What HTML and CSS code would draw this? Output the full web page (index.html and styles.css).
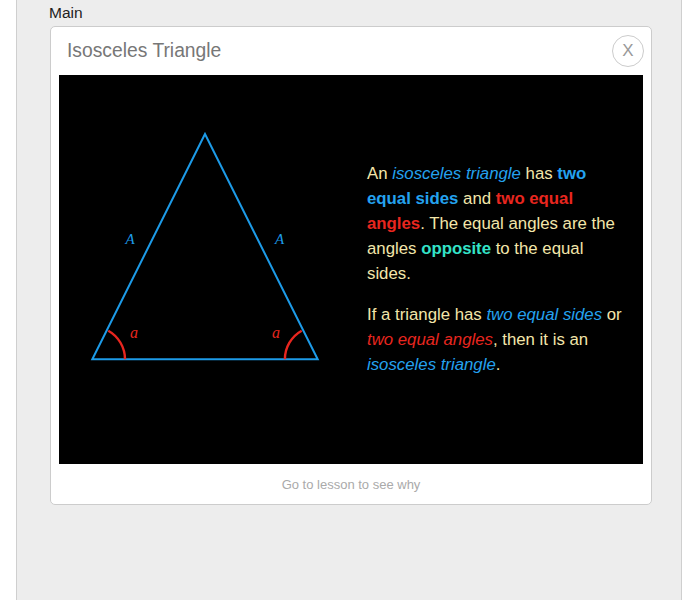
FILE: index.html
```html
<!DOCTYPE html>
<html>
<head>
<meta charset="utf-8">
<link rel="stylesheet" href="styles.css">
</head>
<body>
<div class="panel">
  <div class="label">Main</div>
  <div class="card">
    <div class="card-header">
      <div class="title">Isosceles Triangle</div>
      <div class="close">X</div>
    </div>
    <div class="figure">
      <svg class="diagram" width="290" height="389" viewBox="0 0 290 389">
        <polygon points="146,59 33.3,284.3 258.7,284.3" fill="none" stroke="#1d9be8" stroke-width="2" stroke-linejoin="miter"/>
        <path d="M49.3,255.7 A32.8,32.8 0 0 1 66,284.3" fill="none" stroke="#e8261f" stroke-width="2.4"/>
        <path d="M242.7,255.7 A32.8,32.8 0 0 0 225.9,284.3" fill="none" stroke="#e8261f" stroke-width="2.4"/>
        <text class="lbl-side" x="71" y="168.5" text-anchor="middle">A</text>
        <text class="lbl-side" x="220.5" y="168.5" text-anchor="middle">A</text>
        <text class="lbl-angle" x="75" y="262.5" text-anchor="middle">a</text>
        <text class="lbl-angle" x="217" y="262.5" text-anchor="middle">a</text>
      </svg>
      <div class="explain">
        <p>An <em class="blue">isosceles triangle</em> has <b class="blue">two equal sides</b> and <b class="red">two equal angles</b>. The equal angles are the angles <b class="teal">opposite</b> to the equal sides.</p>
        <p>If a triangle has <em class="blue">two equal sides</em> or <em class="red">two equal angles</em>, then it is an <em class="blue">isosceles triangle</em>.</p>
      </div>
    </div>
    <div class="card-footer">Go to lesson to see why</div>
  </div>
</div>
</body>
</html>
```
FILE: styles.css
```css
html, body {
  margin: 0;
  padding: 0;
  background: #ffffff;
}

body {
  font-family: "Liberation Sans", Arial, sans-serif;
}

.panel {
  margin-left: 16px;
  width: 666px;
  min-height: 600px;
  box-sizing: border-box;
  border-left: 1px solid #cfcfcf;
  border-right: 1px solid #cfcfcf;
  background: #ededed;
  padding-top: 3px;
}

.label {
  margin-left: 32px;
  font-size: 15.5px;
  line-height: 20px;
  color: #222;
}

.card {
  margin: 3px 0 0 33px;
  width: 602px;
  box-sizing: border-box;
  background: #fff;
  border: 1px solid #cccccc;
  border-radius: 5px;
}

.card-header {
  height: 48px;
  display: flex;
  align-items: center;
  justify-content: space-between;
  padding: 0 7px 0 16px;
}

.title {
  font-size: 19.3px;
  color: #777;
}

.close {
  width: 30px;
  height: 30px;
  border: 1px solid #cccccc;
  border-radius: 50%;
  display: flex;
  align-items: center;
  justify-content: center;
  font-size: 17px;
  color: #999;
}

.figure {
  margin: 0 8px;
  height: 389px;
  background: #000;
  display: flex;
  align-items: center;
}

.diagram {
  flex: none;
  align-self: stretch;
}

.lbl-side {
  font-family: "Liberation Serif", serif;
  font-style: italic;
  font-size: 15px;
  fill: #1d9be8;
}

.lbl-angle {
  font-family: "Liberation Serif", serif;
  font-style: italic;
  font-size: 16px;
  fill: #e8261f;
}

.explain {
  margin-left: 18px;
  margin-top: -2px;
  width: 260px;
  font-size: 16.8px;
  line-height: 25px;
  color: #f3e6aa;
}

.explain p {
  margin: 0 0 16px;
}

.explain p:last-child {
  margin-bottom: 0;
}

.explain em {
  font-style: italic;
}

.explain b {
  font-weight: bold;
}

.blue { color: #24a2ef; }
.red { color: #e8261f; }
.teal { color: #33e3c8; }

.card-footer {
  height: 40px;
  display: flex;
  align-items: center;
  justify-content: center;
  font-size: 13px;
  color: #aaaaaa;
}
```
